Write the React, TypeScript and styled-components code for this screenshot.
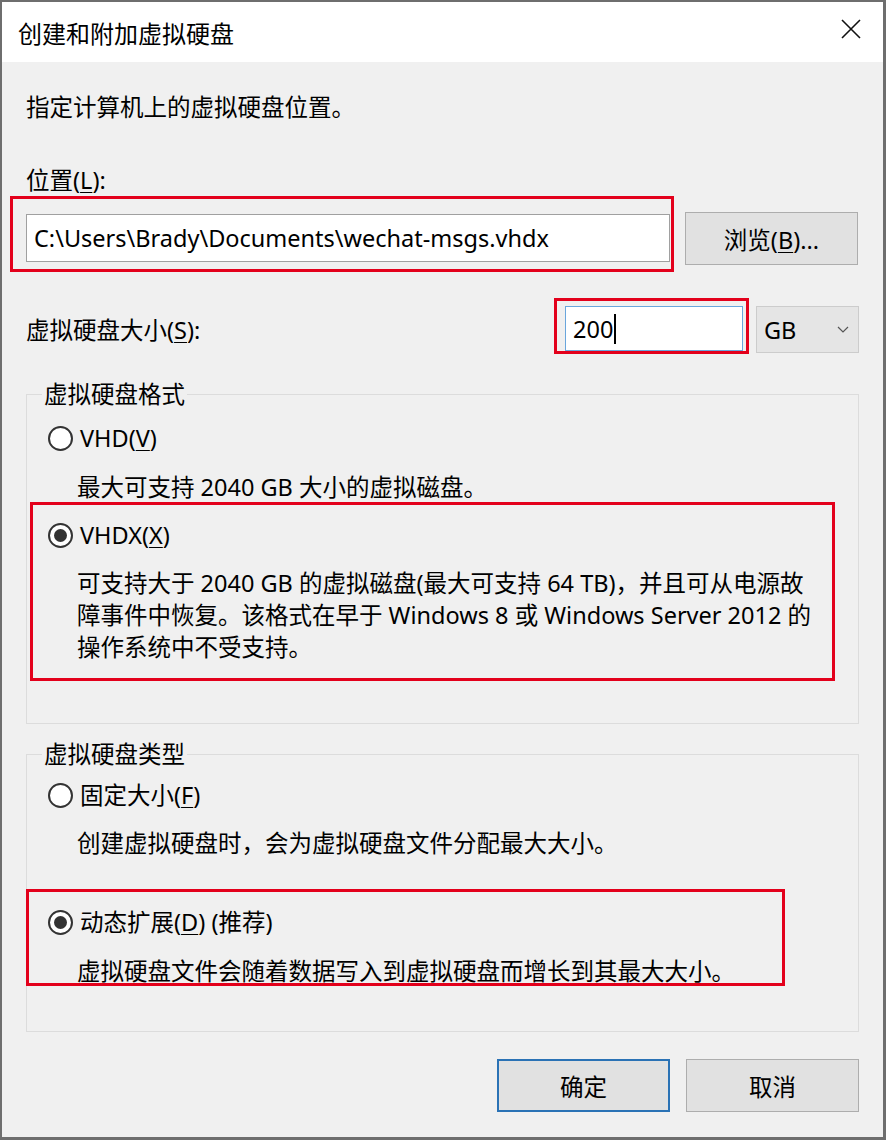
import styled, { createGlobalStyle, css } from "styled-components";

const GlobalStyle = createGlobalStyle`
  html, body {
    margin: 0;
    padding: 0;
    background: #f0f0f0;
  }
  body {
    font-family: "Noto Sans", "Noto Sans CJK SC", sans-serif;
    color: #000;
  }
`;

const FONT = "23.5px";

const Window = styled.div`
  width: 886px;
  height: 1140px;
  box-sizing: border-box;
  border-style: solid;
  border-color: #6e6e6e;
  border-width: 2px 3px 3px 2px;
  background: #f0f0f0;
  display: flex;
  flex-direction: column;
`;

const TitleBar = styled.div`
  height: 60px;
  flex-shrink: 0;
  background: #fff;
  display: flex;
  align-items: center;
  justify-content: space-between;
  padding: 0 22px 0 16px;
  font-size: 24px;
`;

const CloseIcon = styled.svg`
  width: 20px;
  height: 20px;
  margin-bottom: 6px;
`;

const Body = styled.div`
  padding: 29px 24px 0 24px;
  display: flex;
  flex-direction: column;
  font-size: ${FONT};
`;

const Line = styled.div<{ $top?: number; $lh?: number }>`
  margin-top: ${(p) => p.$top ?? 0}px;
  line-height: ${(p) => p.$lh ?? 32}px;
  white-space: nowrap;
`;

const Key = styled.u`
  text-underline-offset: 3px;
  text-decoration-thickness: 1px;
`;

const Highlight = styled.div<{ $pad: string; $margin: string; $width?: number }>`
  border: 3px solid #e3001b;
  padding: ${(p) => p.$pad};
  margin: ${(p) => p.$margin};
  ${(p) =>
    p.$width &&
    css`
      width: ${p.$width}px;
      box-sizing: border-box;
    `}
`;

const Row = styled.div<{ $top?: number }>`
  display: flex;
  align-items: flex-start;
  margin-top: ${(p) => p.$top ?? 0}px;
`;

const TextBox = styled.div<{ $w: number; $h: number; $focus?: boolean }>`
  width: ${(p) => p.$w}px;
  height: ${(p) => p.$h}px;
  box-sizing: border-box;
  background: #fff;
  border: 1px solid ${(p) => (p.$focus ? "#6aa6dc" : "#a0a0a0")};
  padding-left: 7px;
  display: flex;
  align-items: center;
  font-size: ${FONT};
  white-space: nowrap;
`;

const Caret = styled.span`
  display: inline-block;
  width: 2px;
  height: 30px;
  background: #000;
  margin-left: 1px;
`;

const Button = styled.button<{ $primary?: boolean; $top?: number; $left?: number }>`
  width: 173px;
  height: 53px;
  margin-top: ${(p) => p.$top ?? 0}px;
  margin-left: ${(p) => p.$left ?? 0}px;
  box-sizing: border-box;
  background: #e1e1e1;
  border: ${(p) => (p.$primary ? "2px solid #2a72b5" : "1px solid #adadad")};
  font-family: inherit;
  font-size: ${FONT};
  color: #000;
  padding: 0;
  cursor: default;
`;

const Select = styled.div`
  width: 103px;
  height: 47px;
  margin: 8px 0 0 7px;
  box-sizing: border-box;
  background: #e5e5e5;
  border: 1px solid #cccccc;
  display: flex;
  align-items: center;
  justify-content: space-between;
  padding: 0 9px 0 7px;
`;

const SizeLabel = styled.div`
  margin-top: 16px;
  line-height: 32px;
  margin-right: auto;
`;

const Group = styled.fieldset<{ $top: number; $bottom: number }>`
  margin: ${(p) => p.$top}px 0 0 0;
  border: 1px solid #dcdcdc;
  padding: 0 23px ${(p) => p.$bottom}px 21px;
  min-width: 0;
`;

const Legend = styled.legend`
  margin-left: -6px;
  padding: 0 2px;
  line-height: 32px;
  font-size: ${FONT};
`;

const Option = styled.label<{ $top?: number }>`
  display: flex;
  align-items: center;
  gap: 7px;
  margin-top: ${(p) => p.$top ?? 0}px;
  line-height: 32px;
  white-space: nowrap;
`;

const Radio = styled.span<{ $checked?: boolean }>`
  width: 25px;
  height: 25px;
  box-sizing: border-box;
  border: 2px solid #333;
  border-radius: 50%;
  background: #fff;
  display: flex;
  align-items: center;
  justify-content: center;
  &::after {
    content: "";
    width: 13px;
    height: 13px;
    border-radius: 50%;
    background: #333;
    display: ${(p) => (p.$checked ? "block" : "none")};
  }
`;

const Desc = styled.div<{ $top?: number; $lh?: number }>`
  margin-left: 29px;
  margin-top: ${(p) => p.$top ?? 0}px;
  line-height: ${(p) => p.$lh ?? 32}px;
  white-space: nowrap;
`;

const Footer = styled.div`
  display: flex;
  justify-content: flex-end;
  gap: 16px;
  margin-top: 27px;
`;

export default function App() {
  return (
    <>
      <GlobalStyle />
      <Window>
        <TitleBar>
          <span>创建和附加虚拟硬盘</span>
          <CloseIcon viewBox="0 0 20 20">
            <path d="M1 1 L19 19 M19 1 L1 19" stroke="#111" strokeWidth="1.6" fill="none" />
          </CloseIcon>
        </TitleBar>
        <Body>
          <Line>指定计算机上的虚拟硬盘位置。</Line>
          <Line $top={41}>
            位置(<Key>L</Key>):
          </Line>
          <Row>
            <Highlight $pad="15px 1px 7px 13px" $margin="0 0 0 -16px">
              <TextBox $w={644} $h={48}>
                C:\Users\Brady\Documents\wechat-msgs.vhdx
              </TextBox>
            </Highlight>
            <Button $top={16} $left={11}>
              浏览(<Key>B</Key>)...
            </Button>
          </Row>
          <Row $top={26}>
            <SizeLabel>
              虚拟硬盘大小(<Key>S</Key>):
            </SizeLabel>
            <Highlight $pad="5px 3px 0 8px" $margin="0">
              <TextBox $w={178} $h={45} $focus>
                200
                <Caret />
              </TextBox>
            </Highlight>
            <Select>
              <span>GB</span>
              <svg width="12" height="8" viewBox="0 0 12 8">
                <polyline points="1,1 6,6 11,1" stroke="#555" strokeWidth="1.2" fill="none" />
              </svg>
            </Select>
          </Row>

          <Group $top={24} $bottom={42}>
            <Legend>虚拟硬盘格式</Legend>
            <Option $top={12}>
              <Radio />
              <span>
                VHD(<Key>V</Key>)
              </span>
            </Option>
            <Desc $top={18} $lh={30}>
              最大可支持 2040 GB 大小的虚拟磁盘。
            </Desc>
            <Highlight $pad="14px 0 15px 15px" $margin="0 0 0 -18px">
              <Option>
                <Radio $checked />
                <span>
                  VHDX(<Key>X</Key>)
                </span>
              </Option>
              <Desc $top={16}>
                可支持大于 2040 GB 的虚拟磁盘(最大可支持 64 TB)，并且可从电源故
                <br />
                障事件中恢复。该格式在早于 Windows 8 或 Windows Server 2012 的
                <br />
                操作系统中不受支持。
              </Desc>
            </Highlight>
          </Group>

          <Group $top={14} $bottom={45}>
            <Legend>虚拟硬盘类型</Legend>
            <Option $top={9}>
              <Radio />
              <span>
                固定大小(<Key>F</Key>)
              </span>
            </Option>
            <Desc $top={16}>创建虚拟硬盘时，会为虚拟硬盘文件分配最大大小。</Desc>
            <Highlight $pad="14px 0 0 19px" $margin="30px 50px 0 -22px">
              <Option>
                <Radio $checked />
                <span>
                  动态扩展(<Key>D</Key>) (推荐)
                </span>
              </Option>
              <Desc $top={21} $lh={24}>
                虚拟硬盘文件会随着数据写入到虚拟硬盘而增长到其最大大小。
              </Desc>
            </Highlight>
          </Group>

          <Footer>
            <Button $primary>确定</Button>
            <Button>取消</Button>
          </Footer>
        </Body>
      </Window>
    </>
  );
}
